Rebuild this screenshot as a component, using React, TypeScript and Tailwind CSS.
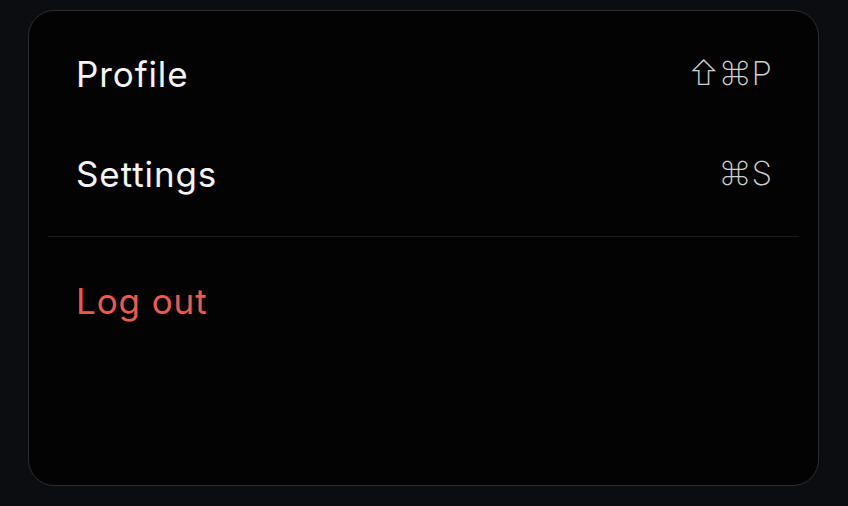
import { ReactNode } from "react";

type Item = {
  label: string;
  shortcut?: string;
};

const items: Item[] = [
  { label: "Profile", shortcut: "⇧⌘P" },
  { label: "Settings", shortcut: "⌘S" },
];

function Row({ children, right, danger }: { children: ReactNode; right?: string; danger?: boolean }) {
  return (
    <div className="flex h-[100px] items-center justify-between pl-[28px] pr-[27px]">
      <span
        className={
          danger
            ? "text-[35px] tracking-[0.9px] text-[#ea5a4e]"
            : "text-[35px] tracking-[0.9px] text-[#f4f4f4]"
        }
      >
        {children}
      </span>
      {right && (
        <span className="text-[33px] font-extralight text-[#cfcfcf] font-['Inter','DejaVu_Sans',sans-serif]">
          {right}
        </span>
      )}
    </div>
  );
}

export default function App() {
  return (
    <div className="h-[506px] w-[848px] bg-[#0c0d10] pl-[28px] pt-[10px] font-['Inter','Noto_Sans',sans-serif]">
      <div className="h-[476px] w-[791px] rounded-[26px] border border-[#2c2c31] bg-[#030303] px-[19px] pt-[13px]">
        {items.map((item) => (
          <Row key={item.label} right={item.shortcut}>
            {item.label}
          </Row>
        ))}
        <div className="my-[12px] h-px bg-[#1c1c1f]" />
        <div className="mt-[14px]">
          <Row danger>Log out</Row>
        </div>
      </div>
    </div>
  );
}
